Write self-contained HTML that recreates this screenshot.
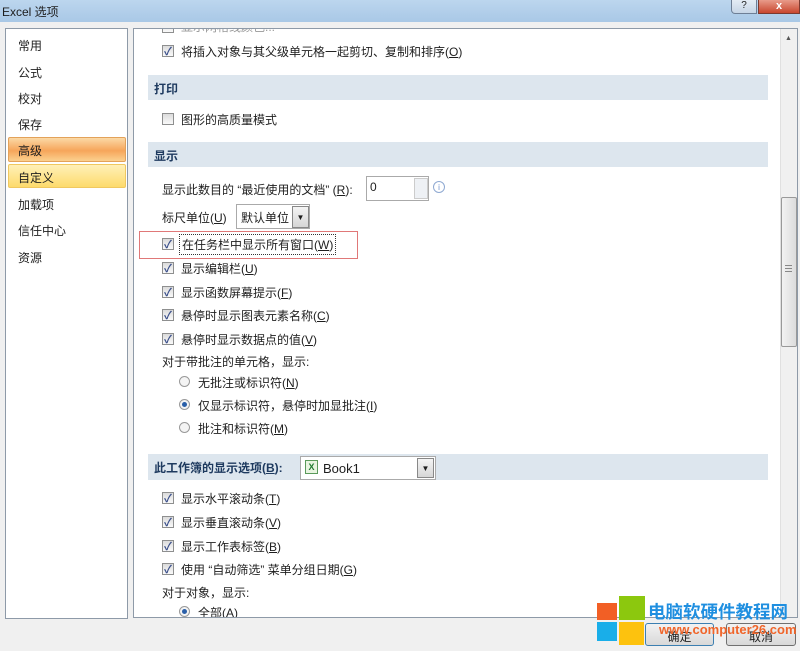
<!DOCTYPE html>
<html><head><meta charset="utf-8"><style>
*{margin:0;padding:0;box-sizing:border-box}
body{width:800px;height:651px;overflow:hidden;background:#f0f0f0;font-family:"Liberation Sans","Noto Sans CJK SC",sans-serif;font-size:12px;color:#1e1e1e;position:relative}
.a{position:absolute;white-space:nowrap}
.title{left:0;top:0;width:800px;height:22px;background:linear-gradient(#bcd6ee,#a9c8e6);}
.nav{left:5px;top:28px;width:123px;height:591px;background:#fff;border:1px solid #8e9aa8}
.ni{position:absolute;left:12px;font-size:12px}
.main{left:133px;top:28px;width:665px;height:590px;background:#fff;border:1px solid #8e9aa8;overflow:hidden}
.hdr{position:absolute;left:14px;width:620px;height:25px;background:#dde6ee;font-weight:bold;padding:5px 0 0 6px;color:#1e3a5f}
.cb{position:absolute;width:12px;height:12px;border:1px solid #8e8f8f;background:linear-gradient(#dcdcdc,#fafafa)}
.cb.c::after{content:"✓";position:absolute;left:1px;top:-3px;font-size:11px;color:#3a4f8a;font-weight:bold}
.t{position:absolute;white-space:nowrap}
.rd{position:absolute;width:11px;height:11px;border-radius:50%;border:1px solid #999;background:#f4f4f4}
.rd.s::after{content:"";position:absolute;left:2px;top:2px;width:5px;height:5px;border-radius:50%;background:#2a5fa8}
u{text-decoration:underline}
</style></head><body>
<div class="a title"></div>
<div class="a" style="left:2px;top:3px;font-size:12px">Excel 选项</div>
<div class="a" style="left:731px;top:0;width:26px;height:14px;border:1px solid #6e7f96;border-top:0;border-radius:0 0 0 4px;background:linear-gradient(#e4ecf5,#c6d5e6);font-size:10px;text-align:center">?</div>
<div class="a" style="left:758px;top:0;width:42px;height:14px;border:1px solid #7b3a30;border-top:0;background:linear-gradient(#e89b8a,#c8462e);color:#fff;font-size:11px;text-align:center;font-weight:bold">x</div>

<div class="a nav">
<div class="ni" style="top:8px">常用</div>
<div class="ni" style="top:35px">公式</div>
<div class="ni" style="top:61px">校对</div>
<div class="ni" style="top:87px">保存</div>
<div style="position:absolute;left:2px;top:108px;width:118px;height:25px;border:1px solid #e3a25a;border-radius:2px;background:linear-gradient(#fbd9a6,#f6a55a 55%,#fbd08e)"></div>
<div class="ni" style="top:113px">高级</div>
<div style="position:absolute;left:2px;top:135px;width:118px;height:24px;border:1px solid #f0c860;border-radius:2px;background:linear-gradient(#fff0b8,#fddb6c)"></div>
<div class="ni" style="top:140px">自定义</div>
<div class="ni" style="top:167px">加载项</div>
<div class="ni" style="top:193px">信任中心</div>
<div class="ni" style="top:220px">资源</div>
</div>

<div class="a main">
<div class="cb" style="left:28px;top:-8px"></div>
<div class="t" style="left:47px;top:-11px;color:#999">显示网格线颜色...</div>
<div class="cb c" style="left:28px;top:16px"></div><div class="t" style="left:47px;top:14px">将插入对象与其父级单元格一起剪切、复制和排序(<u>O</u>)</div>
<div class="hdr" style="top:46px">打印</div>
<div class="cb" style="left:28px;top:84px"></div><div class="t" style="left:47px;top:82px">图形的高质量模式</div>
<div class="hdr" style="top:113px">显示</div>
<div class="t" style="left:28px;top:152px">显示此数目的 “最近使用的文档” (<u>R</u>):</div>
<div class="t" style="left:232px;top:147px;width:63px;height:25px;border:1px solid #aaa;background:#fff;padding:3px 0 0 3px">0</div>
<div class="t" style="left:280px;top:149px;width:14px;height:21px;border:1px solid #ccc;background:#eef1f5"></div>
<div class="t" style="left:299px;top:152px;width:12px;height:12px;border:1px solid #8fa9d2;border-radius:50%;color:#6d8fcb;font-size:8px;text-align:center;line-height:11px">i</div>
<div class="t" style="left:28px;top:180px">标尺单位(<u>U</u>)</div>
<div class="t" style="left:102px;top:175px;width:74px;height:25px;border:1px solid #aaa;background:#fff;padding:4px 0 0 4px">默认单位</div>
<div class="t" style="left:158px;top:177px;width:17px;height:22px;border:1px solid #888;background:linear-gradient(#f4f4f4,#d6d6d6);font-size:8px;text-align:center;line-height:22px">▼</div>
<div class="t" style="left:5px;top:202px;width:219px;height:28px;border:1px solid #e07878"></div>
<div class="cb c" style="left:28px;top:209px"></div><div class="t" style="left:45px;top:205px;border:1px dotted #333;padding:1px 2px">在任务栏中显示所有窗口(<u>W</u>)</div>
<div class="cb c" style="left:28px;top:233px"></div><div class="t" style="left:47px;top:231px">显示编辑栏(<u>U</u>)</div>
<div class="cb c" style="left:28px;top:257px"></div><div class="t" style="left:47px;top:255px">显示函数屏幕提示(<u>F</u>)</div>
<div class="cb c" style="left:28px;top:280px"></div><div class="t" style="left:47px;top:278px">悬停时显示图表元素名称(<u>C</u>)</div>
<div class="cb c" style="left:28px;top:304px"></div><div class="t" style="left:47px;top:302px">悬停时显示数据点的值(<u>V</u>)</div>
<div class="t" style="left:28px;top:324px">对于带批注的单元格，显示:</div>
<div class="rd" style="left:45px;top:347px"></div><div class="t" style="left:64px;top:345px">无批注或标识符(<u>N</u>)</div>
<div class="rd s" style="left:45px;top:370px"></div><div class="t" style="left:64px;top:368px">仅显示标识符，悬停时加显批注(<u>I</u>)</div>
<div class="rd" style="left:45px;top:393px"></div><div class="t" style="left:64px;top:391px">批注和标识符(<u>M</u>)</div>
<div class="hdr" style="top:425px;height:26px">此工作簿的显示选项(<u>B</u>):</div>
<div class="t" style="left:166px;top:427px;width:136px;height:24px;border:1px solid #aaa;background:#fff;padding:4px 0 0 22px;font-size:13px">Book1</div>
<div class="t" style="left:171px;top:431px;width:13px;height:14px;border:1px solid #5a9a5a;background:#e8f4e0;color:#1f7a30;font-size:9px;font-weight:bold;text-align:center;line-height:12px">X</div>
<div class="t" style="left:283px;top:429px;width:17px;height:20px;border:1px solid #888;background:linear-gradient(#f4f4f4,#d6d6d6);font-size:8px;text-align:center;line-height:20px">▼</div>
<div class="cb c" style="left:28px;top:463px"></div><div class="t" style="left:47px;top:461px">显示水平滚动条(<u>T</u>)</div>
<div class="cb c" style="left:28px;top:487px"></div><div class="t" style="left:47px;top:485px">显示垂直滚动条(<u>V</u>)</div>
<div class="cb c" style="left:28px;top:511px"></div><div class="t" style="left:47px;top:509px">显示工作表标签(<u>B</u>)</div>
<div class="cb c" style="left:28px;top:534px"></div><div class="t" style="left:47px;top:532px">使用 “自动筛选” 菜单分组日期(<u>G</u>)</div>
<div class="t" style="left:28px;top:555px">对于对象，显示:</div>
<div class="rd s" style="left:45px;top:577px"></div><div class="t" style="left:64px;top:575px">全部(<u>A</u>)</div>
<div class="t" style="left:646px;top:0;width:18px;height:590px;background:#f0f0f0;border-left:1px solid #e0e0e0"></div>
<div class="t" style="left:651px;top:6px;font-size:7px;color:#555">▲</div>
<div class="t" style="left:647px;top:168px;width:16px;height:150px;border:1px solid #999;border-radius:2px;background:linear-gradient(90deg,#f2f2f2,#dcdcdc)"></div>
<div class="t" style="left:651px;top:236px;width:7px;height:7px;border-top:1px solid #888;border-bottom:1px solid #888"></div>
<div class="t" style="left:651px;top:239px;width:7px;height:1px;background:#888"></div>
</div>

<div class="a" style="left:597px;top:603px;width:20px;height:17px;background:#f25f25"></div>
<div class="a" style="left:619px;top:596px;width:26px;height:24px;background:#8cc80e"></div>
<div class="a" style="left:597px;top:622px;width:20px;height:19px;background:#19aee9"></div>
<div class="a" style="left:619px;top:622px;width:25px;height:23px;background:#fdc20e"></div>
<div class="a" style="left:645px;top:623px;width:69px;height:23px;border:1px solid #3c7fb1;border-radius:3px;background:linear-gradient(#f2f2f2,#d8d8d8);text-align:center;padding-top:4px">确定</div>
<div class="a" style="left:726px;top:623px;width:70px;height:23px;border:1px solid #707070;border-radius:3px;background:linear-gradient(#f2f2f2,#d8d8d8);text-align:center;padding-top:4px">取消</div>
<div class="a" style="left:648px;top:599px;font-size:17.5px;font-weight:bold;color:#1f8fe0">电脑软硬件教程网</div>
<div class="a" style="left:659px;top:622px;font-size:13px;font-weight:bold;color:#f0652a">www.computer26.com</div>
</body></html>
